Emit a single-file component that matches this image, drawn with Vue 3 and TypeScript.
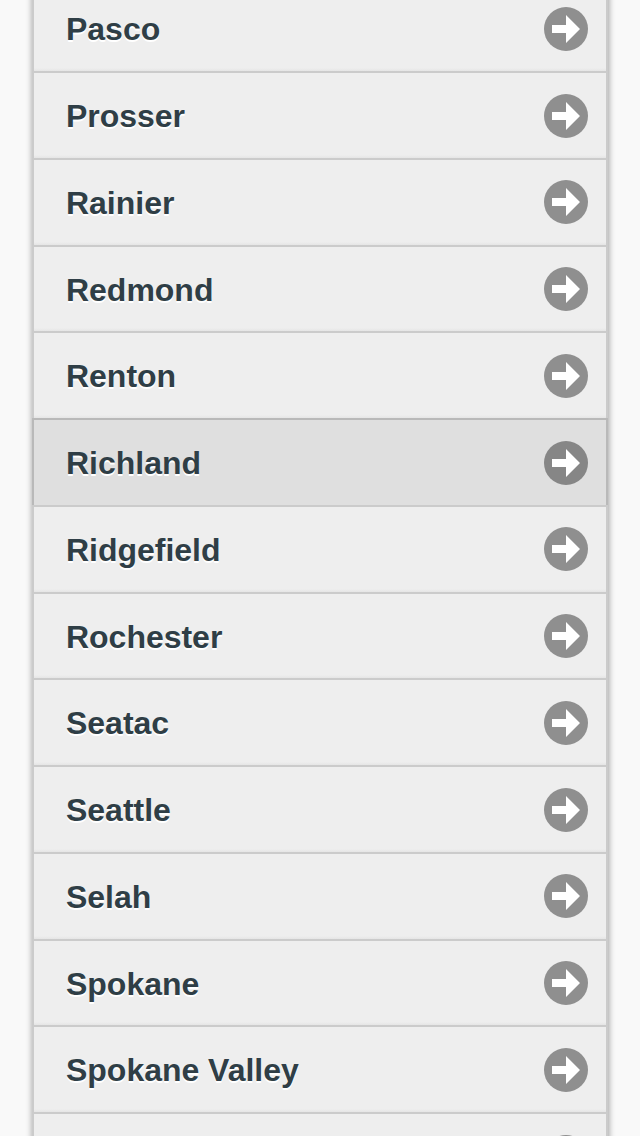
<script setup lang="ts">
interface City {
  name: string
  pressed?: boolean
}

const cities: City[] = [
  { name: 'Pasco' },
  { name: 'Prosser' },
  { name: 'Rainier' },
  { name: 'Redmond' },
  { name: 'Renton' },
  { name: 'Richland', pressed: true },
  { name: 'Ridgefield' },
  { name: 'Rochester' },
  { name: 'Seatac' },
  { name: 'Seattle' },
  { name: 'Selah' },
  { name: 'Spokane' },
  { name: 'Spokane Valley' },
  { name: '' },
]
</script>

<template>
  <main class="page">
    <ul class="list">
      <li v-for="(city, i) in cities" :key="i" class="row" :class="{ pressed: city.pressed }">
        <span class="name">{{ city.name }}</span>
        <svg class="arrow" width="44" height="44" viewBox="0 0 44 44" aria-hidden="true">
          <circle class="disc" cx="22" cy="22" r="22" />
          <path d="M8 18H22V8L36 22L22 36V26H8Z" fill="#fff" />
        </svg>
      </li>
    </ul>
  </main>
</template>

<style>
body {
  margin: 0;
  background: #f9f9f9;
}
</style>

<style scoped>
.page {
  height: 1136px;
  overflow: hidden;
  background: #f9f9f9;
  font-family: "Liberation Sans", Arial, sans-serif;
}
.list {
  list-style: none;
  margin: -15.75px 32px 0;
  padding: 0;
  box-shadow: 0 2px 6px 0.5px rgba(0, 0, 0, 0.36);
}
.row {
  box-sizing: border-box;
  height: 86.75px;
  display: flex;
  align-items: flex-start;
  justify-content: space-between;
  padding: 20.625px 18px 0 32px;
  border: 2px solid #cbcbcb;
  border-bottom: 0;
  background: linear-gradient(to top, #e5e5e5, #eee 3px);
}
.row.pressed {
  border-color: #b9b9b9;
  background: #dfdfdf;
}
.name {
  margin-top: 0.4px;
  font-size: 32px;
  font-weight: bold;
  line-height: 44px;
  letter-spacing: -0.02px;
  color: #2f3e46;
  text-shadow: 0 2px 0 #fff;
  white-space: nowrap;
}
.arrow {
  display: block;
  flex: none;
}
.disc {
  fill: #8f8f8f;
}
.pressed .disc {
  fill: #868686;
}
</style>
